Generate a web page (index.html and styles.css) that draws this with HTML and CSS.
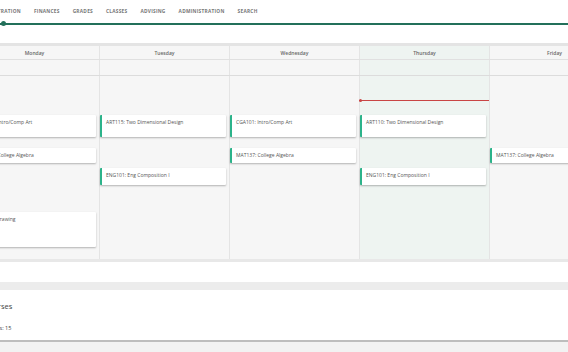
FILE: index.html
```html
<!DOCTYPE html>
<html lang="en">
<head>
    <meta charset="UTF-8">
    <meta name="viewport" content="width=device-width, initial-scale=1.0">
    <title>Weekly Schedule</title>
    <link rel="stylesheet" href="styles.css">
</head>
<body>
    <div class="page">
        <nav class="top-nav">
            <a class="nav-item">REGISTRATION</a>
            <a class="nav-item">FINANCES</a>
            <a class="nav-item">GRADES</a>
            <a class="nav-item">CLASSES</a>
            <a class="nav-item">ADVISING</a>
            <a class="nav-item">ADMINISTRATION</a>
            <a class="nav-item">SEARCH</a>
            <span class="nav-marker"></span>
        </nav>
        <div class="subheader"></div>

        <section class="calendar">
            <div class="cal-row day-heads">
                <div class="day-head">Monday</div>
                <div class="day-head">Tuesday</div>
                <div class="day-head">Wednesday</div>
                <div class="day-head today">Thursday</div>
                <div class="day-head">Friday</div>
            </div>
            <div class="cal-row all-day">
                <div class="all-day-cell"></div>
                <div class="all-day-cell"></div>
                <div class="all-day-cell"></div>
                <div class="all-day-cell today"></div>
                <div class="all-day-cell"></div>
            </div>
            <div class="cal-row week">
                <div class="day-col">
                    <div class="event" style="top: 39px; height: 22px;">CGA101: Intro/Comp Art</div>
                    <div class="event" style="top: 72px; height: 15px;">MAT137: College Algebra</div>
                    <div class="event" style="top: 136px; height: 35px;">ART105: Drawing</div>
                </div>
                <div class="day-col">
                    <div class="event" style="top: 39px; height: 22px;">ART115: Two Dimensional Design</div>
                    <div class="event" style="top: 92px; height: 17px;">ENG101: Eng Composition I</div>
                </div>
                <div class="day-col">
                    <div class="event" style="top: 39px; height: 22px;">CGA101: Intro/Comp Art</div>
                    <div class="event" style="top: 72px; height: 15px;">MAT137: College Algebra</div>
                </div>
                <div class="day-col today">
                    <div class="now-line" style="top: 24px;"></div>
                    <div class="event" style="top: 39px; height: 22px;">ART110: Two Dimensional Design</div>
                    <div class="event" style="top: 92px; height: 17px;">ENG101: Eng Composition I</div>
                </div>
                <div class="day-col">
                    <div class="event" style="top: 72px; height: 15px;">MAT137: College Algebra</div>
                </div>
            </div>
        </section>

        <div class="spacer"></div>

        <section class="summary">
            <h2 class="summary-title">Courses</h2>
            <p class="summary-credits">Credits: 15</p>
        </section>
    </div>
</body>
</html>
```

FILE: styles.css
```css
* {
    margin: 0;
    padding: 0;
    box-sizing: border-box;
}

body {
    font-family: 'Open Sans', 'Liberation Sans', sans-serif;
    background-color: #f2f2f2;
    color: #444;
    overflow: hidden;
}

.page {
    width: 650px;
    margin-left: -30px;
}

.top-nav {
    position: relative;
    display: flex;
    align-items: center;
    gap: 13px;
    height: 25px;
    padding: 1px 0 2px 13px;
    background-color: white;
    border-bottom: 2px solid #23705a;
}

.nav-item {
    font-size: 4.8px;
    font-weight: 700;
    letter-spacing: 0.25px;
    color: #777;
}

.nav-marker {
    position: absolute;
    left: 31px;
    bottom: -3px;
    width: 5px;
    height: 5px;
    border-radius: 50%;
    background-color: #23705a;
}

.subheader {
    height: 18px;
    background-color: white;
}

.calendar {
    background-color: #f6f6f6;
    border-top: 3px solid #e4e4e4;
    border-bottom: 3px solid #e8e8e8;
}

.cal-row {
    display: grid;
    grid-template-columns: repeat(5, 130px);
}

.day-heads {
    height: 14px;
    border-bottom: 1px solid #e0e0e0;
}

.day-head {
    display: flex;
    align-items: center;
    justify-content: center;
    font-size: 5px;
    font-weight: 600;
    color: #666;
    border-right: 1px solid #e4e4e4;
}

.all-day {
    height: 16px;
    border-bottom: 1px solid #dcdcdc;
}

.all-day-cell {
    border-right: 1px solid #e4e4e4;
}

.week {
    height: 183px;
}

.day-col {
    position: relative;
    border-right: 1px solid #e4e4e4;
}

.today {
    background-color: #eef4f1;
}

.event {
    position: absolute;
    left: 0;
    right: 3px;
    padding: 4px 3px 0 4px;
    background-color: white;
    border-left: 2px solid #2cb38a;
    border-radius: 1px;
    box-shadow: 0 1px 2px rgba(0, 0, 0, 0.28);
    font-size: 5px;
    line-height: 7px;
    color: #555;
}

.now-line {
    position: absolute;
    left: -1px;
    right: 0;
    height: 1px;
    background-color: #c94545;
}

.now-line::before {
    content: '';
    position: absolute;
    left: 0;
    top: -1px;
    width: 3px;
    height: 3px;
    border-radius: 50%;
    background-color: #c94545;
}

.spacer {
    height: 28px;
    background-color: white;
    border-bottom: 8px solid #ececec;
}

.summary {
    height: 52px;
    padding: 11px 0 0 14px;
    background-color: white;
    border-bottom: 2px solid #bdbdbd;
}

.summary-title {
    font-size: 7.5px;
    font-weight: 400;
    color: #444;
    line-height: 10px;
}

.summary-credits {
    margin-top: 13px;
    font-size: 5.5px;
    color: #444;
}
```
